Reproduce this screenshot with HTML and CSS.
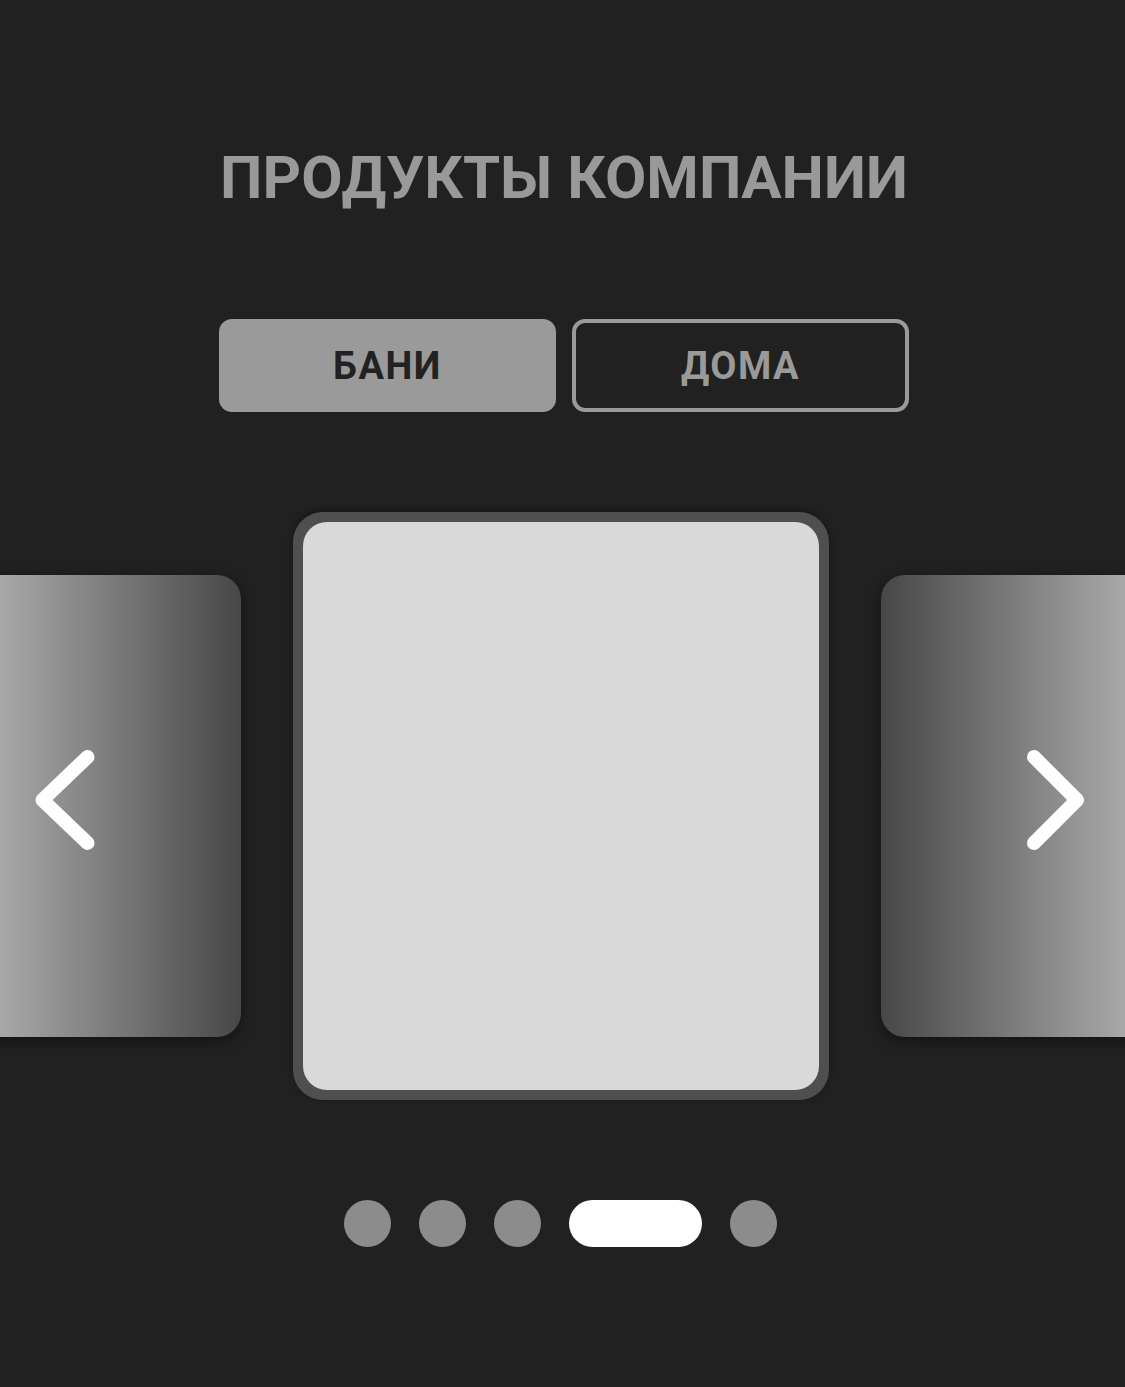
FILE: index.html
```html
<!DOCTYPE html>
<html lang="ru">
<head>
<meta charset="utf-8">
<title>Продукты компании</title>
<link rel="stylesheet" href="styles.css">
</head>
<body>
<main class="page">
  <h1 class="title">ПРОДУКТЫ КОМПАНИИ</h1>
  <div class="tabs">
    <button class="tab tab-active">БАНИ</button>
    <button class="tab tab-outline">ДОМА</button>
  </div>
  <div class="carousel">
    <div class="side side-left">
      <svg class="arrow arrow-left" viewBox="0 0 70 110" width="70" height="110"><path d="M54.5 12 L9.5 55 L54.5 98" fill="none" stroke="#fff" stroke-width="14" stroke-linecap="round" stroke-linejoin="round"/></svg>
    </div>
    <div class="main-card"><div class="main-inner"></div></div>
    <div class="side side-right">
      <svg class="arrow arrow-right" viewBox="0 0 70 110" width="70" height="110"><path d="M10 12 L53 55 L10 98" fill="none" stroke="#fff" stroke-width="14" stroke-linecap="round" stroke-linejoin="round"/></svg>
    </div>
  </div>
  <div class="dots">
    <span class="dot"></span>
    <span class="dot"></span>
    <span class="dot"></span>
    <span class="dot dot-active"></span>
    <span class="dot"></span>
  </div>
</main>
</body>
</html>
```
FILE: styles.css
```css
html, body {
  margin: 0;
  padding: 0;
  background: #212121;
  overflow: hidden;
}
.page {
  width: 1125px;
  height: 1387px;
  overflow: hidden;
  display: flex;
  flex-direction: column;
  align-items: center;
  font-family: "Roboto", "Liberation Sans", sans-serif;
}
.title {
  margin: 148px 0 0 3px;
  font-family: "Roboto", "Liberation Sans", sans-serif;
  font-size: 60px;
  line-height: 60px;
  font-weight: 700;
  color: #999999;
  letter-spacing: 0;
  white-space: nowrap;
}
.tabs {
  margin-top: 111px;
  margin-left: 3px;
  display: flex;
  gap: 16px;
}
.tab {
  width: 337px;
  height: 93px;
  border-radius: 13px;
  font-family: "Roboto", "Liberation Sans", sans-serif;
  font-size: 38px;
  font-weight: 700;
  letter-spacing: 1.5px;
  display: flex;
  align-items: center;
  justify-content: center;
  padding: 0;
  box-sizing: border-box;
}
.tab-active {
  background: #9a9a9a;
  border: none;
  color: #222222;
}
.tab-outline {
  background: transparent;
  border: 4px solid #9a9a9a;
  color: #9a9a9a;
}
.carousel {
  margin-top: 100px;
  width: 1125px;
  box-sizing: border-box;
  padding-right: 4px;
  display: flex;
  justify-content: center;
  align-items: center;
  gap: 52px;
}
.side {
  flex: 0 0 300px;
  height: 462px;
  border-radius: 24px;
  position: relative;
  box-shadow: 0 4px 14px rgba(0, 0, 0, 0.45);
}
.side-left {
  background: linear-gradient(90deg, #a9a9a9 19%, #474747 100%);
}
.side-right {
  background: linear-gradient(90deg, #474747 0%, #a8a8a8 81%);
}
.arrow {
  position: absolute;
  top: 170px;
}
.arrow-left { left: 92px; }
.arrow-right { left: 143.5px; }
.main-card {
  flex: 0 0 536px;
  height: 588px;
  box-sizing: border-box;
  padding: 10px;
  background: #4f4f4f;
  border-radius: 30px;
  display: flex;
  box-shadow: 0 -2px 6px rgba(0, 0, 0, 0.35);
}
.main-inner {
  flex: 1;
  background: #d9d9d9;
  border-radius: 24px;
}
.dots {
  margin-top: 100px;
  margin-right: 5px;
  display: flex;
  gap: 28px;
}
.dot {
  width: 47px;
  height: 47px;
  border-radius: 24px;
  background: #8c8c8c;
}
.dot-active {
  width: 133px;
  background: #ffffff;
}
```
